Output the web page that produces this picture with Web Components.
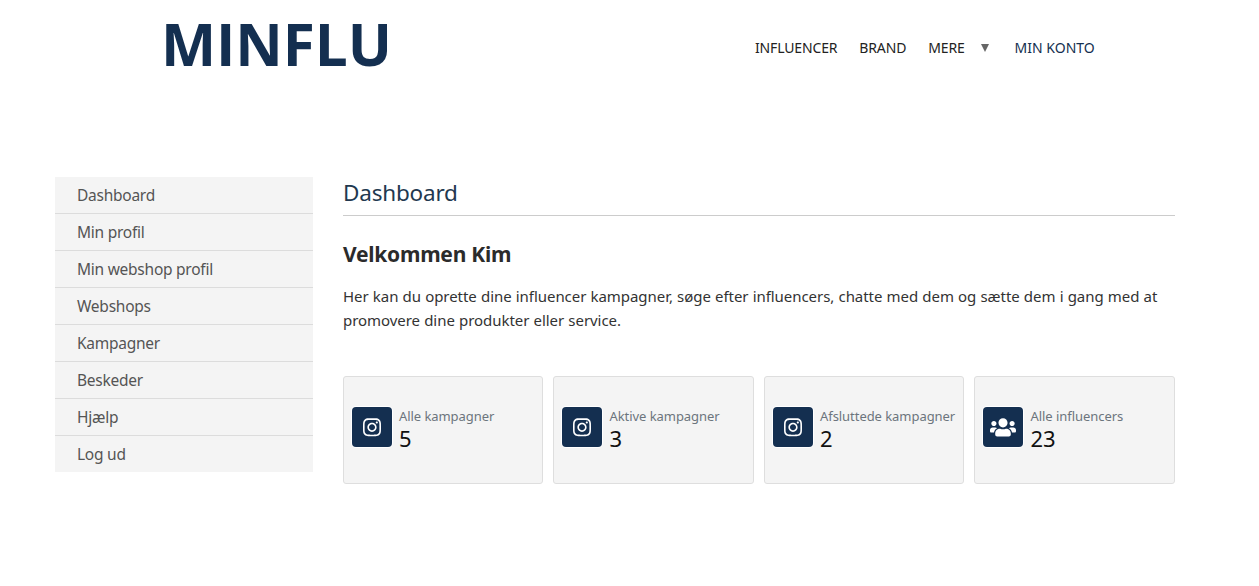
<!DOCTYPE html>
<html lang="da"><head><meta charset="utf-8"><title>Minflu</title>
<style>
html,body{margin:0;padding:0;background:#fff}
body{font-family:"Noto Sans","Open Sans",sans-serif;color:#212529}
</style></head><body>
<site-header></site-header>
<dash-layout>
  <side-menu slot="side"></side-menu>
  <page-title>Dashboard</page-title>
  <welcome-text name="Kim">Her kan du oprette dine influencer kampagner, søge efter influencers, chatte med dem og sætte dem i gang med at promovere dine produkter eller service.</welcome-text>
  <card-row>
    <stat-card label="Alle kampagner" value="5"></stat-card>
    <stat-card label="Aktive kampagner" value="3"></stat-card>
    <stat-card label="Afsluttede kampagner" value="2"></stat-card>
    <stat-card label="Alle influencers" value="23" icon="users"></stat-card>
  </card-row>
</dash-layout>
<script>
function def(name, html){
  customElements.define(name, class extends HTMLElement{
    connectedCallback(){
      if(this.shadowRoot) return;
      const r=this.attachShadow({mode:'open'});
      r.innerHTML=typeof html==='function'?html(this):html;
    }
  });
}
def('site-header',`<style>
:host{display:flex;height:177px;align-items:flex-start;box-sizing:border-box;padding-left:161px}
.logo{font:700 58.5px/1 "Open Sans",sans-serif;color:#142f50;letter-spacing:-.1px;margin-top:14px;width:594px;height:58px}
nav{display:flex;align-items:center;margin-top:38px;font-size:14px;line-height:20px;color:#222;letter-spacing:-.15px}
nav span{white-space:nowrap}
.a{margin-right:22px}
.tri{width:0;height:0;border-left:4.5px solid transparent;border-right:4.5px solid transparent;border-top:8px solid #666;margin:0 25.5px 0 16.5px}
.k{color:#142f50;letter-spacing:0}
</style><div class="logo">MINFLU</div><nav><span class="a">INFLUENCER</span><span class="a">BRAND</span><span>MERE</span><i class="tri"></i><span class="k">MIN KONTO</span></nav>`);
def('dash-layout',`<style>
:host{display:flex;padding-left:55px;width:1175px;gap:30px;box-sizing:border-box}
.m{flex:1;min-width:0}
</style><slot name="side"></slot><div class="m"><slot></slot></div>`);
def('side-menu',()=>`<style>
:host{display:block;width:258px;flex:none;align-self:flex-start;background:#f4f4f4}
a{display:block;height:36px;line-height:36px;padding-left:22px;font-size:15.5px;letter-spacing:-.25px;color:#555;border-bottom:1px solid #dcdcdc}
a:last-child{border-bottom:0}
</style>`+['Dashboard','Min profil','Min webshop profil','Webshops','Kampagner','Beskeder','Hjælp','Log ud'].map(t=>`<a>${t}</a>`).join(''));
def('page-title',`<style>
:host{display:block;height:38px;border-bottom:1px solid #ccc;font-size:22.5px;letter-spacing:-.2px;line-height:32px;color:#22384f}
</style><slot></slot>`);
def('welcome-text',e=>`<style>
:host{display:block;padding-top:23px}
h2{margin:0 0 15px;font-size:21px;letter-spacing:-.25px;line-height:30px;font-weight:700;color:#2b2b2b}
p{margin:0;font-size:15px;letter-spacing:-.05px;word-spacing:.35px;line-height:24px;color:#333}
</style><h2>Velkommen ${e.getAttribute('name')}</h2><p><slot></slot></p>`);
def('card-row',`<style>
:host{display:grid;grid-template-columns:repeat(4,1fr);gap:10px;margin:44px 0 0 -.1px}
</style><slot></slot>`);
const insta=`<svg width="18" height="20.6" viewBox="0 0 448 512" fill="#fff"><path d="M224.1 141c-63.6 0-114.9 51.3-114.9 114.9s51.3 114.9 114.9 114.9S339 319.5 339 255.9 287.700 141 224.1 141zm0 189.600c-41.1 0-74.700-33.500-74.700-74.700s33.500-74.700 74.700-74.700 74.700 33.500 74.700 74.700-33.600 74.700-74.700 74.700zm146.400-194.300c0 14.900-12 26.800-26.800 26.800-14.900 0-26.800-12-26.800-26.800s12-26.800 26.800-26.800 26.800 12 26.800 26.800zm76.100 27.200c-1.700-35.900-9.900-67.700-36.200-93.900-26.200-26.200-58-34.400-93.900-36.200-37-2.100-147.900-2.100-184.900 0-35.800 1.700-67.600 9.900-93.900 36.100s-34.400 58-36.200 93.900c-2.100 37-2.100 147.900 0 184.900 1.700 35.900 9.900 67.700 36.200 93.900s58 34.400 93.900 36.200c37 2.100 147.900 2.100 184.900 0 35.900-1.700 67.700-9.900 93.900-36.200 26.200-26.200 34.400-58 36.200-93.900 2.100-37 2.100-147.800 0-184.800zM398.800 388c-7.800 19.600-22.900 34.700-42.600 42.600-29.500 11.700-99.500 9-132.100 9s-102.700 2.600-132.100-9c-19.600-7.800-34.700-22.900-42.600-42.600-11.700-29.500-9-99.500-9-132.100s-2.600-102.700 9-132.100c7.800-19.600 22.900-34.700 42.600-42.600 29.500-11.700 99.500-9 132.100-9s102.700-2.600 132.100 9c19.600 7.800 34.700 22.900 42.600 42.600 11.700 29.500 9 99.500 9 132.100s2.700 102.700-9 132.100z"/></svg>`;
const users=`<svg width="26" height="20.8" viewBox="0 0 640 512" fill="#fff"><path d="M96 224c35.300 0 64-28.700 64-64s-28.700-64-64-64-64 28.700-64 64 28.700 64 64 64zm448 0c35.300 0 64-28.700 64-64s-28.700-64-64-64-64 28.700-64 64 28.700 64 64 64zm32 32h-64c-17.600 0-33.500 7.100-45.100 18.600 40.300 22.100 68.900 62 75.100 109.400h66c17.700 0 32-14.300 32-32v-32c0-35.300-28.700-64-64-64zm-256 0c61.900 0 112-50.100 112-112S381.900 32 320 32 208 82.100 208 144s50.100 112 112 112zm76.800 32h-8.300c-20.800 10-43.900 16-68.500 16s-47.600-6-68.500-16h-8.300C179.600 288 128 339.600 128 403.200V432c0 26.500 21.500 48 48 48h288c26.500 0 48-21.500 48-48v-28.800c0-63.600-51.600-115.200-115.200-115.200zm-223.700-13.400C161.500 263.100 145.600 256 128 256H64c-35.300 0-64 28.700-64 64v32c0 17.700 14.300 32 32 32h65.900c6.300-47.400 34.900-87.300 75.200-109.400z"/></svg>`;
def('stat-card',e=>`<style>
:host{display:flex;align-items:flex-start;height:108px;box-sizing:border-box;background:#f4f4f4;border:1px solid #dedede;border-radius:3px;padding:30px 0 0 8px;white-space:nowrap;min-width:0}
.i{width:40px;height:40px;background:#142f50;border-radius:4px;display:flex;align-items:center;justify-content:center;margin-right:7px;flex:none;box-shadow:0 0 0 1px #fff}
.l{font-size:13px;letter-spacing:-.05px;line-height:18px;color:#6c757d}
.v{font-size:22px;line-height:26px;color:#111}
</style><div class="i">${e.getAttribute('icon')==='users'?users:insta}</div><div><div class="l">${e.getAttribute('label')}</div><div class="v">${e.getAttribute('value')}</div></div>`);
</script>
</body></html>
